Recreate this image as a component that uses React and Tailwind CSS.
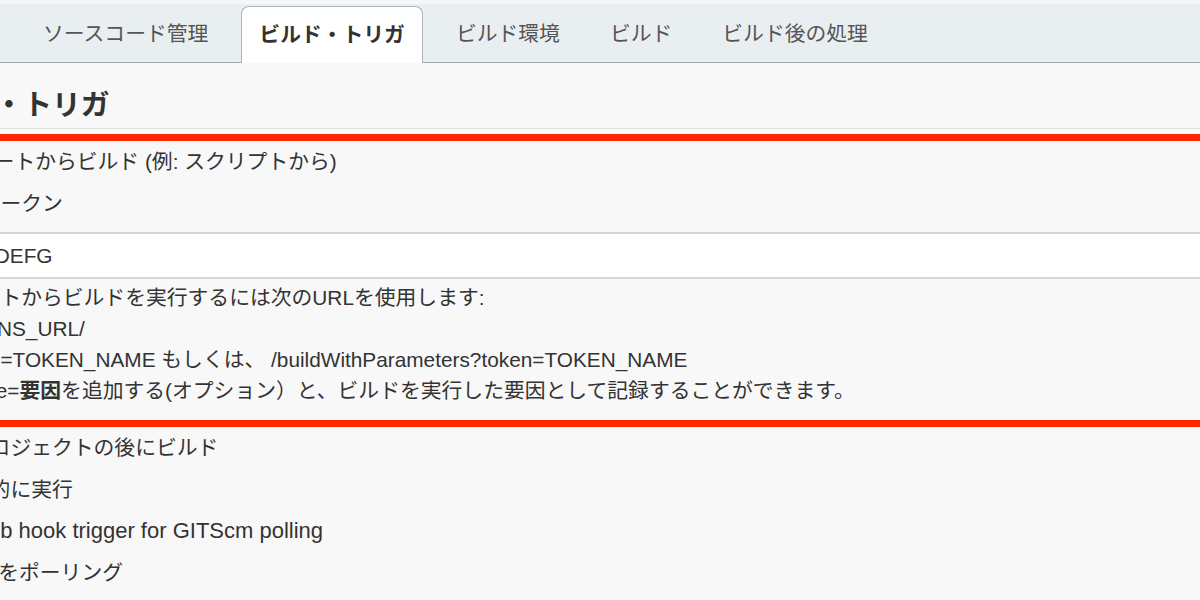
import React from 'react';

const tabs = ['ソースコード管理', 'ビルド・トリガ', 'ビルド環境', 'ビルド', 'ビルド後の処理'];
const active = 1;

const font = { fontFamily: '"Liberation Sans", "Noto Sans CJK JP", sans-serif' };

export default function App() {
  return (
    <div className="w-[1200px] h-[600px] overflow-hidden bg-[#f8f8f8] text-[#333]" style={font}>
      {/* top strip + tab bar */}
      <div className="h-[4px] bg-[#f3f5f7]" />
      <div className="flex items-end gap-[16px] pl-[26px] h-[59px] bg-[#e9eef1] border-b border-[#9eabb5]">
        {tabs.map((t, i) =>
          i === active ? (
            <div
              key={t}
              className="-mb-px h-[57px] px-[17px] flex items-center bg-white border border-b-0 border-[#a9b5bf] rounded-t-[8px] text-[20.8px] font-bold text-[#333] whitespace-nowrap"
            >
              {t}
            </div>
          ) : (
            <div key={t} className="h-[56px] px-[17px] flex items-center text-[20.8px] text-[#555] whitespace-nowrap">
              {t}
            </div>
          )
        )}
      </div>

      {/* section, left side cut off by the viewport */}
      <div className="-ml-[92px] w-[1500px]">
        <h2 className="pt-[22px] h-[62px] leading-[40px] text-[28.8px] font-bold whitespace-nowrap">ビルド・トリガ</h2>
        <div className="mt-[3px] border-t border-[#e0e0e0]" />
        <div className="mt-[5px] h-[7px] bg-[#ff2600]" />

        <div className="ml-[44px] h-[42px] flex items-center text-[20.8px] whitespace-nowrap">
          リモートからビルド (例: スクリプトから)
        </div>

        <div className="ml-[30px]">
          <div className="h-[42px] flex items-center text-[20.8px] whitespace-nowrap">認証トークン</div>
          <div className="mt-[7px] h-[47px] flex items-center pl-[14px] bg-white border-y-2 border-[#d6d6d6] text-[20.8px]">
            ABCDEFG
          </div>
          <div className="mt-[3px] text-[20.8px] leading-[31px] whitespace-nowrap">
            <div>リモートからビルドを実行するには次のURLを使用します:</div>
            <div>JENKINS_URL/</div>
            <div>?token=TOKEN_NAME もしくは、 /buildWithParameters?token=TOKEN_NAME</div>
            <div>
              &amp;cause=<span className="font-bold">要因</span>を追加する(オプション）と、ビルドを実行した要因として記録することができます。
            </div>
          </div>
        </div>

        <div className="mt-[14px] h-[7px] bg-[#ff2600]" />

        <div className="text-[20.8px] whitespace-nowrap">
          <div className="ml-[40px] h-[41.6px] flex items-center">他プロジェクトの後にビルド</div>
          <div className="ml-[40px] h-[41.6px] flex items-center">定期的に実行</div>
          <div className="ml-[36px] h-[41.6px] flex items-center text-[22px]">GitHub hook trigger for GITScm polling</div>
          <div className="ml-[44px] h-[41.6px] flex items-center">SCMをポーリング</div>
        </div>
      </div>
    </div>
  );
}
